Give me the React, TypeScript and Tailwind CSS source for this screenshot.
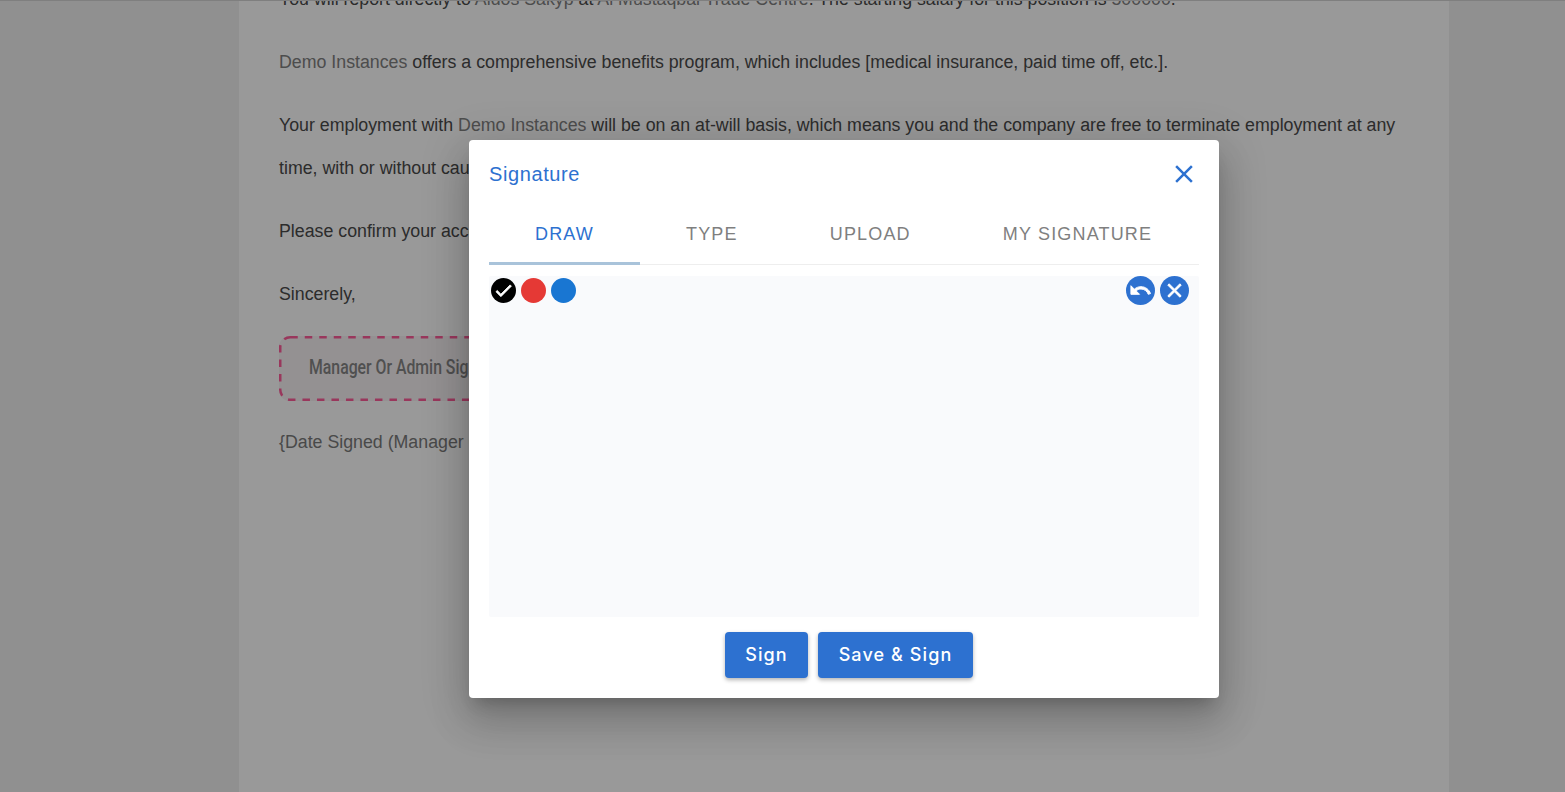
import React from 'react';

const CLOSE = 'M19 6.41 17.59 5 12 10.59 6.41 5 5 6.41 10.59 12 5 17.59 6.41 19 12 13.41 17.59 19 19 17.59 13.41 12z';
const UNDO = 'M12.5 8c-2.65 0-5.05.99-6.9 2.6L2 7v9h9l-3.62-3.62c1.39-1.16 3.16-1.88 5.12-1.88 3.54 0 6.55 2.31 7.6 5.5l2.37-.78C21.08 11.03 17.15 8 12.5 8z';
const CHECK = 'M9 16.17 4.83 12l-1.42 1.41L9 19 21 7l-1.41-1.41z';

const Icon = ({ d, className, bold }: { d: string; className: string; bold?: boolean }) => (
  <svg viewBox="0 0 24 24" fill="currentColor" stroke={bold ? 'currentColor' : 'none'} className={className}>
    <path d={d} />
  </svg>
);

const Var = ({ children }: { children: React.ReactNode }) => (
  <span className="text-[#808080]">{children}</span>
);

const tabs = [
  { label: 'DRAW', active: true },
  { label: 'TYPE', active: false },
  { label: 'UPLOAD', active: false },
  { label: 'MY SIGNATURE', active: false },
];

export default function App() {
  return (
    <div className="relative h-[792px] overflow-hidden bg-[#f0f0f0] font-['Liberation_Sans',Arial,sans-serif]">
      {/* Document behind the dialog */}
      <div className="ml-[239px] flex h-full w-[1210px] flex-col bg-white px-10 text-[17.78px] leading-[43px] text-[#4a4a4a]">
        <div className="-mt-[22px] flex flex-col gap-5">
          <p>
            You will report directly to <Var>Aidos Sakyp</Var> at <Var>Al Mustaqbal Trade Centre</Var>. The starting salary for this position is <Var>500000</Var>.
          </p>
          <p>
            <Var>Demo Instances</Var> offers a comprehensive benefits program, which includes [medical insurance, paid time off, etc.].
          </p>
          <p>
            Your employment with <Var>Demo Instances</Var> will be on an at-will basis, which means you and the company are free to terminate employment at any time, with or without cause.
          </p>
          <p>Please confirm your acceptance of this offer by signing below.</p>
          <p>Sincerely,</p>
          <div className="relative flex h-[65px] w-[300px] items-center rounded-[11px] bg-[#f7f2f4] pl-[30px]">
            <svg className="absolute inset-0 h-full w-full" fill="none">
              <rect x="1.25" y="1.25" width="297.5" height="62.5" rx="10" stroke="#ff5c9a" strokeWidth="2.5" strokeDasharray="7.5 7" />
            </svg>
            <span className="origin-left -translate-y-[2px] scale-x-[0.79] whitespace-nowrap font-['Roboto',sans-serif] text-[20px] font-medium leading-none text-[#868686]">
              Manager Or Admin Signature
            </span>
          </div>
          <p className="text-[17.78px] text-[#7a7a7a]">{'{Date Signed (Manager Or Admin)}'}</p>
        </div>
      </div>

      {/* Backdrop */}
      <div className="absolute inset-0 border-t border-[#7f7f7f] bg-black/40" />

      {/* Dialog */}
      <div className="absolute left-[469px] top-[140px] flex h-[558px] w-[750px] flex-col rounded-[4px] bg-white px-5 shadow-[0_11px_15px_-7px_rgba(0,0,0,0.2),0_24px_38px_3px_rgba(0,0,0,0.14),0_9px_46px_8px_rgba(0,0,0,0.12)]">
        <div className="flex h-[69px] items-center justify-between pb-[2px]">
          <h2 className="text-[20px] tracking-[0.6px] text-[#2d71d0]">Signature</h2>
          <Icon d={CLOSE} className="h-[30px] w-[30px] text-[#2d71d0]" />
        </div>

        <div className="flex h-[56px] w-[710px] border-b border-[#eeeeee]">
          {tabs.map((tab) => (
            <div
              key={tab.label}
              className={`relative flex h-[56px] items-center whitespace-nowrap px-[46px] pb-[5px] text-[18px] tracking-[1.17px] ${
                tab.active ? 'text-[#2d71d0]' : 'text-[#7f7f7f]'
              }`}
            >
              {tab.label}
              {tab.active && <span className="absolute inset-x-0 bottom-0 h-[3px] bg-[#a9c3da]" />}
            </div>
          ))}
        </div>

        {/* Signature pad */}
        <div className="mt-[11px] flex h-[341px] items-start justify-between rounded-[2px] bg-[#f9fafc] pl-[2px] pr-[10px]">
          <div className="flex gap-[5px] pt-[2px]">
            <span className="flex h-[25px] w-[25px] items-center justify-center rounded-full bg-black text-white">
              <Icon d={CHECK} bold className="h-[21px] w-[21px]" />
            </span>
            <span className="h-[25px] w-[25px] rounded-full bg-[#e53935]" />
            <span className="h-[25px] w-[25px] rounded-full bg-[#1976d2]" />
          </div>
          <div className="flex gap-[5px]">
            <span className="flex h-[29px] w-[29px] items-center justify-center rounded-full bg-[#2d71d0] text-white">
              <Icon d={UNDO} bold className="h-[23px] w-[23px]" />
            </span>
            <span className="flex h-[29px] w-[29px] items-center justify-center rounded-full bg-[#2d71d0] text-white">
              <Icon d={CLOSE} bold className="h-[23px] w-[23px]" />
            </span>
          </div>
        </div>

        <div className="mt-[15px] flex justify-center gap-[10px] pl-[10px] font-['Inter',sans-serif] text-[18px] font-medium tracking-[1.1px] text-white">
          <button className="h-[46px] w-[83px] rounded-[4px] bg-[#2d71d0] pb-[2px] shadow-[0_2px_4px_rgba(0,0,0,0.3)]">Sign</button>
          <button className="h-[46px] w-[155px] rounded-[4px] bg-[#2d71d0] pb-[2px] shadow-[0_2px_4px_rgba(0,0,0,0.3)]">Save &amp; Sign</button>
        </div>
      </div>
    </div>
  );
}
